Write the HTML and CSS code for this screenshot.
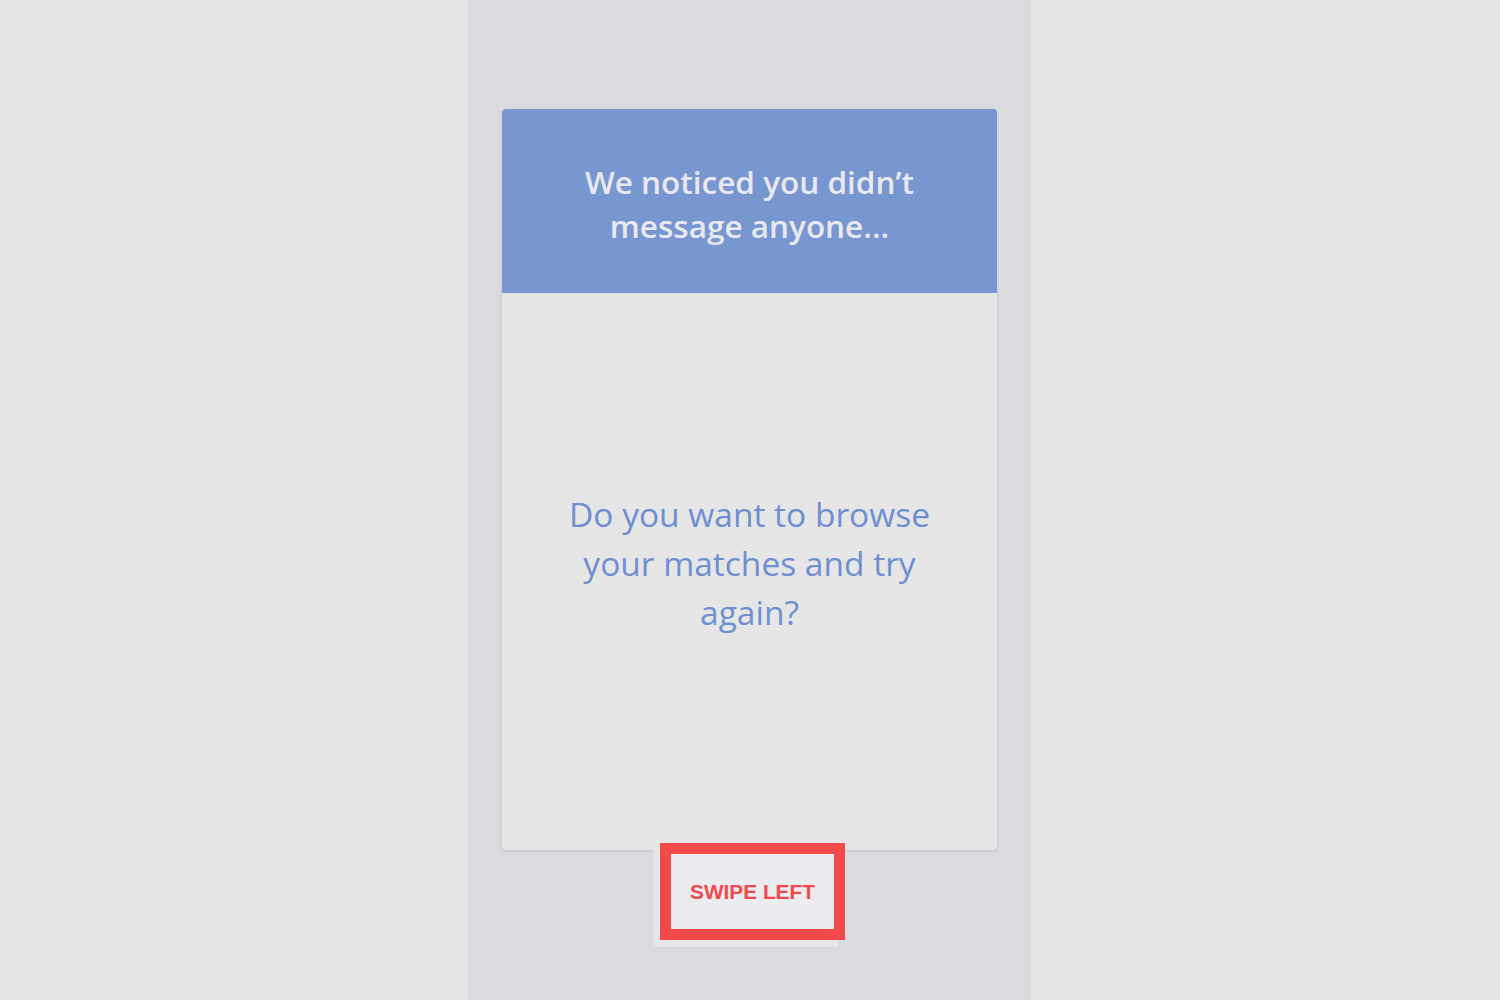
FILE: index.html
```html
<!DOCTYPE html>
<html>
<head>
<meta charset="utf-8">
<link rel="stylesheet" href="styles.css">
</head>
<body>
<div class="screen">
  <div class="card">
    <div class="card-head">
      <h1 class="head-title">We noticed you didn’t message anyone...</h1>
    </div>
    <div class="card-body">
      <p class="question">Do you want to browse your matches and try again?</p>
    </div>
  </div>
  <button class="swipe">SWIPE LEFT</button>
</div>
</body>
</html>
```
FILE: styles.css
```css
html, body {
  margin: 0;
  padding: 0;
}
body {
  background: #e5e5e5;
  display: flex;
  padding-left: 468px;
  height: 1000px;
  overflow: hidden;
  font-family: "Open Sans", "Liberation Sans", sans-serif;
}
.screen {
  width: 563px;
  height: 1000px;
  background: #dadbde;
  box-sizing: border-box;
  padding-top: 109px;
  display: flex;
  flex-direction: column;
  align-items: center;
}
.card {
  width: 495px;
  height: 741px;
  border-radius: 4px;
  overflow: hidden;
  background: #e6e6e6;
  box-shadow: 0 1px 3px rgba(0,0,0,0.12);
  display: flex;
  flex-direction: column;
}
.card-head {
  height: 184px;
  background: #7896cf;
  display: flex;
  align-items: center;
  justify-content: center;
}
.head-title {
  margin: 0;
  width: 400px;
  text-align: center;
  color: #e8e9ef;
  font-size: 31.5px;
  line-height: 44px;
  font-weight: 600;
  padding-top: 6px;
}
.card-body {
  flex: 1;
  display: flex;
  align-items: center;
  justify-content: center;
}
.question {
  margin: 0;
  width: 400px;
  text-align: center;
  color: #6f8fd2;
  font-size: 33.5px;
  line-height: 49px;
  font-weight: 400;
  padding-bottom: 16px;
}
.swipe {
  margin: -7px 0 0 6px;
  width: 185px;
  height: 97px;
  box-sizing: border-box;
  border: 11px solid #f24a4b;
  background: #ebebf0;
  box-shadow: -7px 7px 0 #e5e6e8;
  color: #f24a4b;
  font-family: "Liberation Sans", Arial, sans-serif;
  font-weight: 700;
  font-size: 20.8px;
  padding: 0;
  position: relative;
}
```
